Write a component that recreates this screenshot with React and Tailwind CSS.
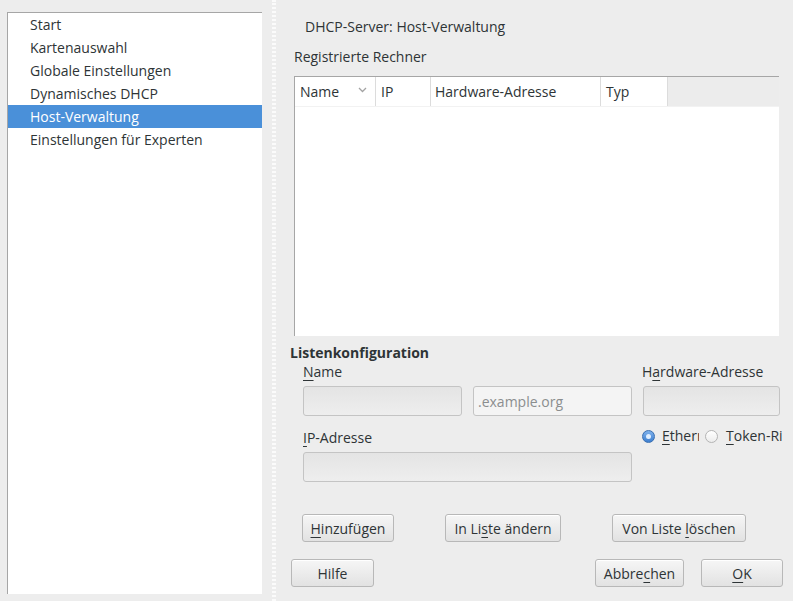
import React from 'react';

const navItems = [
  'Start',
  'Kartenauswahl',
  'Globale Einstellungen',
  'Dynamisches DHCP',
  'Host-Verwaltung',
  'Einstellungen für Experten',
];

const Button = ({ children, className = '' }) => (
  <button
    className={`h-[28px] rounded-[3px] border border-[#b8b8b8] bg-gradient-to-b from-[#f6f6f6] to-[#e2e2e2] text-[14px] text-[#2e3436] shadow-[inset_0_1px_0_#ffffff] ${className}`}
  >
    {children}
  </button>
);

const Field = ({ className = '', placeholder }) => (
  <div
    className={`h-[30px] rounded-[3px] border border-[#c4c4c4] ${
      placeholder ? 'bg-[#f4f4f4]' : 'bg-gradient-to-b from-[#e4e4e4] to-[#eeeeee]'
    } flex items-center pl-[4px] text-[14px] text-[#8b8e8f] ${className}`}
  >
    {placeholder}
  </div>
);

const Radio = ({ checked }) =>
  checked ? (
    <span className="w-[13px] h-[13px] rounded-full border border-[#3a6fb0] bg-gradient-to-b from-[#7fb2ec] to-[#3d7fd0] flex items-center justify-center shrink-0">
      <span className="w-[5px] h-[5px] rounded-full bg-[#dfeeff]" />
    </span>
  ) : (
    <span className="block w-[13px] h-[13px] rounded-full border border-[#b4b4b4] bg-gradient-to-b from-[#ffffff] to-[#ececec] shrink-0" />
  );

const U = ({ children }) => <span className="underline underline-offset-[3px]">{children}</span>;

export default function App() {
  return (
    <div
      className="w-[793px] h-[601px] bg-[#ededed] flex overflow-hidden text-[#2e3436] text-[14px]"
      style={{ fontFamily: '"Open Sans", "Noto Sans", sans-serif' }}
    >
      {/* navigation tree */}
      <div className="pl-[7px] pt-[12px] shrink-0">
        <div className="w-[255px] h-[582px] bg-white border-t border-l border-[#a6a6a6]">
          {navItems.map((item) => (
            <div
              key={item}
              className={`h-[23px] flex items-center pl-[22px] ${
                item === 'Host-Verwaltung' ? 'bg-[#4a90d9] text-white' : ''
              }`}
            >
              {item}
            </div>
          ))}
        </div>
      </div>

      {/* pane separator */}
      <div className="ml-[10px] w-[4px] h-full border-x-2 border-dotted border-[#fbfbfb] shrink-0" />

      {/* content */}
      <div className="flex-1 flex flex-col overflow-hidden">
        <div className="mt-[17px] ml-[29px] h-[20px] leading-[20px]">DHCP-Server: Host-Verwaltung</div>
        <div className="mt-[10px] ml-[18px] h-[20px] leading-[20px]">Registrierte Rechner</div>

        <div className="mt-[9px] ml-[18px] w-[485px] h-[260px] bg-white border-t border-l border-[#a6a6a6] flex flex-col">
          <div className="h-[30px] flex bg-[#ececec] border-b border-[#f2f2f2]">
            <div className="w-[81px] bg-white border-r border-[#dcdcdc] flex items-center pl-[5px] pr-[8px] justify-between">
              <span>Name</span>
              <svg width="9" height="6" viewBox="0 0 9 6" className="mt-[-4px]">
                <path d="M1 1 L4.5 4.5 L8 1" fill="none" stroke="#a3a3a3" strokeWidth="1.3" />
              </svg>
            </div>
            <div className="w-[55px] bg-white border-r border-[#dcdcdc] flex items-center pl-[5px]">IP</div>
            <div className="w-[170px] bg-white border-r border-[#dcdcdc] flex items-center pl-[4px]">Hardware-Adresse</div>
            <div className="w-[67px] bg-white border-r border-[#dcdcdc] flex items-center pl-[5px]">Typ</div>
          </div>
        </div>

        <div className="mt-[8px] ml-[14px] h-[19px] leading-[18px] font-bold">Listenkonfiguration</div>

        <div className="ml-[27px] flex h-[18px] leading-[18px]">
          <div className="w-[339px]">
            <U>N</U>ame
          </div>
          <div>
            H<U>a</U>rdware-Adresse
          </div>
        </div>

        <div className="ml-[27px] mt-[5px] flex gap-[11px]">
          <Field className="w-[159px]" />
          <Field className="w-[159px]" placeholder=".example.org" />
          <Field className="w-[137px]" />
        </div>

        <div className="ml-[27px] mt-[11px] flex h-[18px] leading-[18px]">
          <div className="w-[339px] mt-[2px]">
            <U>I</U>P-Adresse
          </div>
          <div className="flex items-center whitespace-nowrap w-[141px] overflow-hidden">
            <Radio checked />
            <span className="ml-[7px] w-[37px] shrink-0 overflow-hidden">
              <U>E</U>thernet
            </span>
            <span className="ml-[6px] shrink-0">
              <Radio />
            </span>
            <span className="ml-[8px]">
              <U>T</U>oken-Ring
            </span>
          </div>
        </div>

        <div className="ml-[27px] mt-[7px]">
          <Field className="w-[329px]" />
        </div>

        <div className="ml-[26px] mt-[32px] flex">
          <Button className="w-[92px]">
            <U>H</U>inzufügen
          </Button>
          <Button className="w-[116px] ml-[51px]">
            In Li<U>s</U>te ändern
          </Button>
          <Button className="w-[134px] ml-[51px]">
            Von Liste <U>l</U>öschen
          </Button>
        </div>

        <div className="ml-[15px] mt-[17px] flex">
          <Button className="w-[83px]">Hilfe</Button>
          <Button className="w-[89px] ml-[221px]">
            Abbre<U>c</U>hen
          </Button>
          <Button className="w-[82px] ml-[17px]">
            <U>O</U>K
          </Button>
        </div>
      </div>
    </div>
  );
}
